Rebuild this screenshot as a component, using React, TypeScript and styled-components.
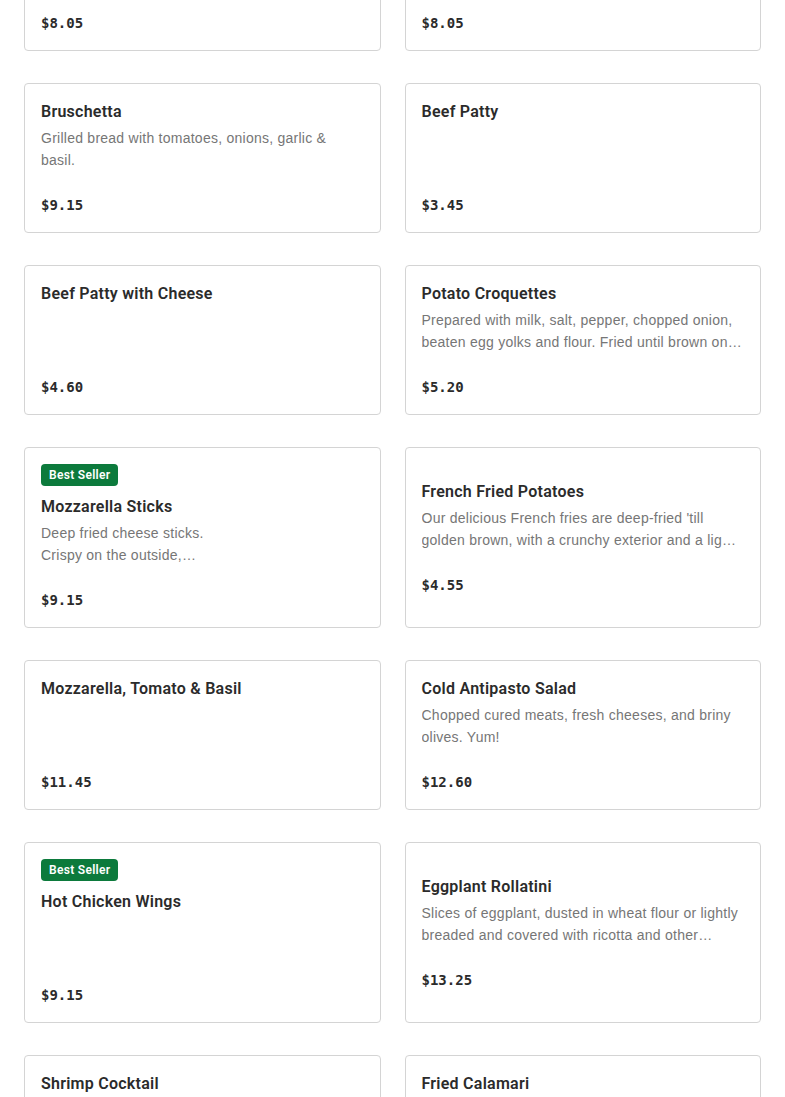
import React from "react";
import styled, { createGlobalStyle } from "styled-components";

const GlobalStyle = createGlobalStyle`
  * {
    box-sizing: border-box;
  }
  body {
    margin: 0;
    background: #ffffff;
    font-family: "Liberation Sans", Arial, sans-serif;
    color: #2b2b2b;
  }
`;

type Item = {
  name: string;
  description?: string;
  price: string;
  bestSeller?: boolean;
};

const items: Item[] = [
  { name: "Garlic Bread", description: "Toasted Italian bread with garlic butter and herbs.", price: "$8.05" },
  { name: "Stuffed Mushrooms", description: "Mushroom caps filled with herbs, cheese and breadcrumbs.", price: "$8.05" },
  { name: "Bruschetta", description: "Grilled bread with tomatoes, onions, garlic & basil.", price: "$9.15" },
  { name: "Beef Patty", price: "$3.45" },
  { name: "Beef Patty with Cheese", price: "$4.60" },
  {
    name: "Potato Croquettes",
    description:
      "Prepared with milk, salt, pepper, chopped onion, beaten egg yolks and flour. Fried until brown on the outside and served hot.",
    price: "$5.20",
  },
  {
    name: "Mozzarella Sticks",
    description: "Deep fried cheese sticks.\nCrispy on the outside,\nmelty on the inside.",
    price: "$9.15",
    bestSeller: true,
  },
  {
    name: "French Fried Potatoes",
    description:
      "Our delicious French fries are deep-fried 'till golden brown, with a crunchy exterior and a light fluffy interior.",
    price: "$4.55",
  },
  { name: "Mozzarella, Tomato & Basil", price: "$11.45" },
  { name: "Cold Antipasto Salad", description: "Chopped cured meats, fresh cheeses, and briny olives. Yum!", price: "$12.60" },
  { name: "Hot Chicken Wings", price: "$9.15", bestSeller: true },
  {
    name: "Eggplant Rollatini",
    description:
      "Slices of eggplant, dusted in wheat flour or lightly breaded and covered with ricotta and other cheeses, rolled and baked.",
    price: "$13.25",
  },
  { name: "Shrimp Cocktail", description: "Chilled jumbo shrimp with cocktail sauce and lemon.", price: "$14.95" },
  { name: "Fried Calamari", description: "Lightly breaded squid rings served with marinara.", price: "$13.80" },
];

const Page = styled.main`
  padding: 0 24px 24px;
  margin-top: -99px;
`;

const Grid = styled.div`
  display: grid;
  grid-template-columns: 1fr 1fr;
  column-gap: 24px;
  row-gap: 32px;
`;

const Card = styled.article`
  display: flex;
  flex-direction: column;
  justify-content: center;
  padding: 16px;
  border: 1px solid #d4d4d4;
  border-radius: 4px;
  background: #ffffff;
`;

const Badge = styled.span`
  align-self: flex-start;
  height: 22px;
  padding: 0 8px;
  margin-bottom: 9px;
  border-radius: 4px;
  background: #0c7a3c;
  color: #ffffff;
  font-family: Roboto, "Liberation Sans", sans-serif;
  font-size: 12px;
  font-weight: 600;
  letter-spacing: 0.3px;
  line-height: 23px;
`;

const Title = styled.h3`
  margin: 0 0 5px;
  padding-top: 1px;
  font-family: Roboto, "Liberation Sans", sans-serif;
  font-size: 16px;
  font-weight: 600;
  letter-spacing: 0.25px;
  line-height: 21px;
  color: #2b2b2b;
`;

const Description = styled.p`
  margin: 0 0 23px;
  min-height: 44px;
  font-size: 14px;
  letter-spacing: 0.25px;
  line-height: 22px;
  color: #767676;
  white-space: pre-line;
  display: -webkit-box;
  -webkit-box-orient: vertical;
  -webkit-line-clamp: 2;
  overflow: hidden;
`;

const Price = styled.span`
  font-family: "DejaVu Sans Mono", "Liberation Mono", monospace;
  font-size: 14px;
  font-weight: 700;
  line-height: 22px;
  color: #2b2b2b;
`;

function MenuCard({ item }: { item: Item }) {
  return (
    <Card>
      {item.bestSeller && <Badge>Best Seller</Badge>}
      <Title>{item.name}</Title>
      <Description>{item.description ?? ""}</Description>
      <Price>{item.price}</Price>
    </Card>
  );
}

export default function App() {
  return (
    <>
      <GlobalStyle />
      <Page>
        <Grid>
          {items.map((item) => (
            <MenuCard key={item.name} item={item} />
          ))}
        </Grid>
      </Page>
    </>
  );
}
